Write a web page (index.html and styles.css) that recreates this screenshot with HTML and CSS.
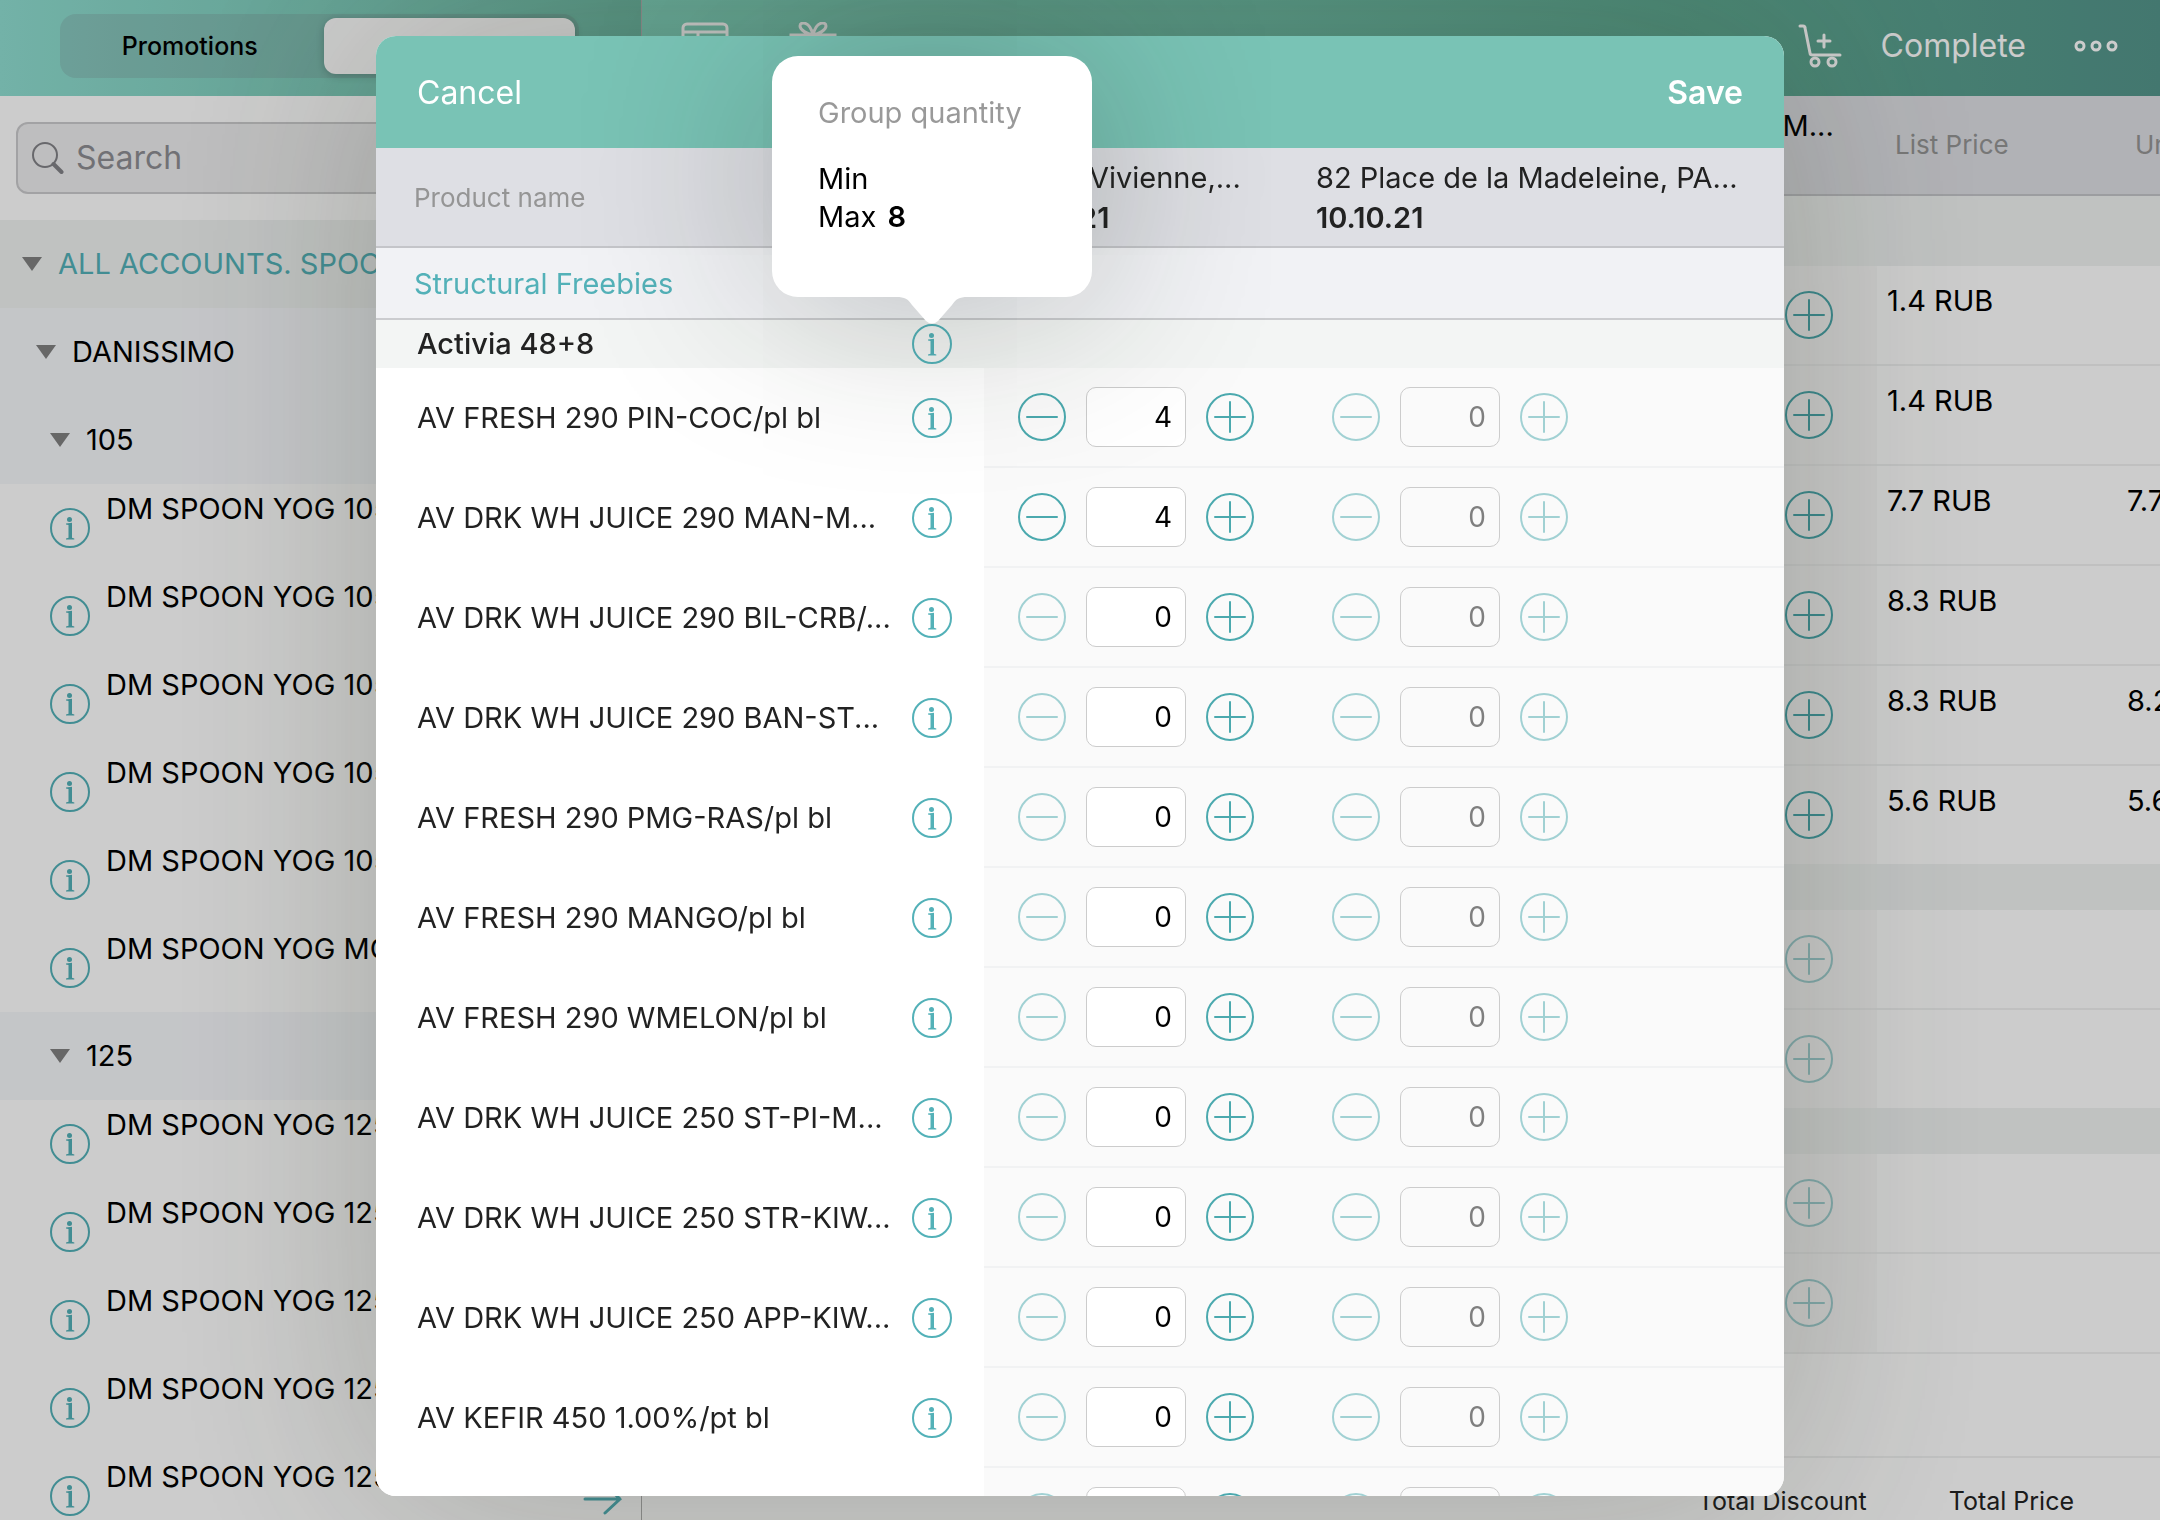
FILE: index.html
```html
<!DOCTYPE html>
<html lang="en">
<head>
<meta charset="utf-8">
<title>Structural Freebies</title>
<link rel="stylesheet" href="styles.css">
</head>
<body>
<svg class="sprite" aria-hidden="true">
  <symbol id="info" viewBox="0 0 40 40"><circle cx="20" cy="20" r="19" fill="none" stroke="currentColor" stroke-width="2"/><circle cx="19.5" cy="11.5" r="2.5" fill="currentColor"/><path d="M16 15.500l6-.7V29.800l2.300.6v1.200h-8.300v-1.200l2.500-.6V17l-2.500-.5z" fill="currentColor"/></symbol>
  <symbol id="plus" viewBox="0 0 48 48"><circle cx="24" cy="24" r="23" fill="none" stroke="currentColor" stroke-width="2"/><path d="M9 24h30M24 9v30" stroke="currentColor" stroke-width="2" stroke-linecap="round"/></symbol>
  <symbol id="minus" viewBox="0 0 48 48"><circle cx="24" cy="24" r="23" fill="none" stroke="currentColor" stroke-width="2"/><path d="M9 24h30" stroke="currentColor" stroke-width="2" stroke-linecap="round"/></symbol>
</svg>

<div class="app">
  <aside class="sidebar">
    <header class="side-nav">
      <div class="segment">
        <button class="segment-item">Promotions</button>
        <button class="segment-item segment-active">Products</button>
      </div>
    </header>
    <div class="search-wrap">
      <label class="search">
        <svg width="32" height="32" viewBox="0 0 32 32" fill="none" stroke="currentColor" aria-hidden="true"><circle cx="13" cy="13" r="12" stroke-width="2"/><path d="M21.500 22l8 8" stroke-width="4" stroke-linecap="round"/></svg>
        <input type="search" placeholder="Search" aria-label="Search">
      </label>
    </div>
    <ul class="tree">
      <li class="node node-root"><i class="caret"></i>ALL ACCOUNTS. SPOON</li>
      <li class="node node-brand"><i class="caret"></i>DANISSIMO</li>
      <li class="node node-size"><i class="caret"></i>105</li>
      <li class="leaf"><svg class="info"><use href="#info"/></svg><span>DM SPOON YOG 105</span></li>
      <li class="leaf"><svg class="info"><use href="#info"/></svg><span>DM SPOON YOG 105</span></li>
      <li class="leaf"><svg class="info"><use href="#info"/></svg><span>DM SPOON YOG 105</span></li>
      <li class="leaf"><svg class="info"><use href="#info"/></svg><span>DM SPOON YOG 105</span></li>
      <li class="leaf"><svg class="info"><use href="#info"/></svg><span>DM SPOON YOG 105</span></li>
      <li class="leaf"><svg class="info"><use href="#info"/></svg><span>DM SPOON YOG MOUSSE</span></li>
      <li class="node node-size"><i class="caret"></i>125</li>
      <li class="leaf"><svg class="info"><use href="#info"/></svg><span>DM SPOON YOG 125</span></li>
      <li class="leaf"><svg class="info"><use href="#info"/></svg><span>DM SPOON YOG 125</span></li>
      <li class="leaf"><svg class="info"><use href="#info"/></svg><span>DM SPOON YOG 125</span></li>
      <li class="leaf"><svg class="info"><use href="#info"/></svg><span>DM SPOON YOG 125</span></li>
      <li class="leaf"><svg class="info"><use href="#info"/></svg><span>DM SPOON YOG 125</span></li>
    </ul>
    <button class="collapse" aria-label="Next"><svg width="40" height="32" viewBox="0 0 40 32" fill="none" stroke="currentColor" stroke-width="3" stroke-linecap="round"><path d="M2 16h35M22 2l15 14-15 14"/></svg></button>
  </aside>

  <main class="order">
    <header class="order-nav">
      <svg width="48" height="48" viewBox="0 0 48 48" fill="none" stroke="currentColor" stroke-width="3" aria-hidden="true"><rect x="2" y="2" width="44" height="40" rx="4"/><path d="M2 10h44M17 10v32"/></svg>
      <svg width="48" height="48" viewBox="0 0 48 48" fill="none" stroke="currentColor" stroke-width="3" aria-hidden="true"><path d="M24 13C18 12 11 8 11 4c0-5 10-5 13 9 3-14 13-14 13-9 0 4-7 8-13 9M2 13h44v8H2zM5 21v23h38V21"/></svg>
      <span class="spacer"></span>
      <button class="nav-button" aria-label="Add to cart"><svg width="44" height="44" viewBox="0 0 44 44" fill="none" stroke="currentColor" stroke-width="3" stroke-linecap="round" stroke-linejoin="round"><path d="M2 2h3q2 0 2 2l5 25q0 2 3 2h27M26 11v12M20 17h12"/><circle cx="17" cy="38" r="4"/><circle cx="34" cy="38" r="4"/></svg></button>
      <button class="nav-button">Complete</button>
      <button class="nav-button nav-more" aria-label="More"><svg width="44" height="12" viewBox="0 0 44 12" fill="none" stroke="currentColor" stroke-width="3"><circle cx="6" cy="6" r="4"/><circle cx="22" cy="6" r="4"/><circle cx="38" cy="6" r="4"/></svg></button>
    </header>
    <table class="prices">
      <colgroup><col><col class="col-store"><col class="col-price"><col class="col-unit"></colgroup>
      <thead>
        <tr><th></th><th class="store">82 Place de la M...</th><th class="caption">List Price</th><th class="caption">Unit Price</th></tr>
      </thead>
      <tbody>
        <tr class="band band-tall"><td colspan="4"></td></tr>
        <tr><td></td><td class="step"><button aria-label="Add"><svg><use href="#plus"/></svg></button></td><td>1.4 RUB</td><td></td></tr>
        <tr><td></td><td class="step"><button aria-label="Add"><svg><use href="#plus"/></svg></button></td><td>1.4 RUB</td><td></td></tr>
        <tr><td></td><td class="step"><button aria-label="Add"><svg><use href="#plus"/></svg></button></td><td>7.7 RUB</td><td>7.7 RUB</td></tr>
        <tr><td></td><td class="step"><button aria-label="Add"><svg><use href="#plus"/></svg></button></td><td>8.3 RUB</td><td></td></tr>
        <tr><td></td><td class="step"><button aria-label="Add"><svg><use href="#plus"/></svg></button></td><td>8.3 RUB</td><td>8.2 RUB</td></tr>
        <tr class="last"><td></td><td class="step"><button aria-label="Add"><svg><use href="#plus"/></svg></button></td><td>5.6 RUB</td><td>5.6 RUB</td></tr>
        <tr class="band"><td colspan="4"></td></tr>
        <tr><td></td><td class="step"><button aria-label="Add" disabled><svg><use href="#plus"/></svg></button></td><td></td><td></td></tr>
        <tr class="last"><td></td><td class="step"><button aria-label="Add" disabled><svg><use href="#plus"/></svg></button></td><td></td><td></td></tr>
        <tr class="band"><td colspan="4"></td></tr>
        <tr><td></td><td class="step"><button aria-label="Add" disabled><svg><use href="#plus"/></svg></button></td><td></td><td></td></tr>
        <tr><td></td><td class="step"><button aria-label="Add" disabled><svg><use href="#plus"/></svg></button></td><td></td><td></td></tr>
      </tbody>
    </table>
    <footer class="totals"><span>Total Discount</span><span>Total Price</span></footer>
  </main>
</div>

<div class="scrim">
  <div class="dialog-frame">
    <section class="dialog" role="dialog" aria-label="Structural Freebies">
      <header class="dialog-nav">
        <button>Cancel</button>
        <button class="strong">Save</button>
      </header>
      <table class="freebies">
        <colgroup><col class="col-name"><col class="col-store"><col></colgroup>
        <thead>
          <tr class="stores">
            <th class="caption">Product name</th>
            <th><div>3 Rue Vivienne,...</div><div class="date">10.10.21</div></th>
            <th><div>82 Place de la Madeleine, PA...</div><div class="date">10.10.21</div></th>
          </tr>
        </thead>
        <tbody>
          <tr class="section"><td colspan="3">Structural Freebies</td></tr>
          <tr class="group"><td><div class="name"><span>Activia 48+8</span><button aria-label="Group quantity"><svg class="info"><use href="#info"/></svg></button></div></td><td colspan="2"></td></tr>
          <tr class="item"><td><div class="name"><span>AV FRESH 290 PIN-COC/pl bl</span><button aria-label="Info"><svg class="info"><use href="#info"/></svg></button></div></td>
            <td><div class="stepper"><button aria-label="Less"><svg><use href="#minus"/></svg></button><input value="4" aria-label="Quantity"><button aria-label="More"><svg><use href="#plus"/></svg></button></div></td>
            <td><div class="stepper"><button aria-label="Less" disabled><svg><use href="#minus"/></svg></button><input value="0" aria-label="Quantity" disabled><button aria-label="More" disabled><svg><use href="#plus"/></svg></button></div></td></tr>
          <tr class="item"><td><div class="name"><span>AV DRK WH JUICE 290 MAN-M...</span><button aria-label="Info"><svg class="info"><use href="#info"/></svg></button></div></td>
            <td><div class="stepper"><button aria-label="Less"><svg><use href="#minus"/></svg></button><input value="4" aria-label="Quantity"><button aria-label="More"><svg><use href="#plus"/></svg></button></div></td>
            <td><div class="stepper"><button aria-label="Less" disabled><svg><use href="#minus"/></svg></button><input value="0" aria-label="Quantity" disabled><button aria-label="More" disabled><svg><use href="#plus"/></svg></button></div></td></tr>
          <tr class="item"><td><div class="name"><span>AV DRK WH JUICE 290 BIL-CRB/...</span><button aria-label="Info"><svg class="info"><use href="#info"/></svg></button></div></td>
            <td><div class="stepper"><button aria-label="Less" disabled><svg><use href="#minus"/></svg></button><input value="0" aria-label="Quantity"><button aria-label="More"><svg><use href="#plus"/></svg></button></div></td>
            <td><div class="stepper"><button aria-label="Less" disabled><svg><use href="#minus"/></svg></button><input value="0" aria-label="Quantity" disabled><button aria-label="More" disabled><svg><use href="#plus"/></svg></button></div></td></tr>
          <tr class="item"><td><div class="name"><span>AV DRK WH JUICE 290 BAN-ST...</span><button aria-label="Info"><svg class="info"><use href="#info"/></svg></button></div></td>
            <td><div class="stepper"><button aria-label="Less" disabled><svg><use href="#minus"/></svg></button><input value="0" aria-label="Quantity"><button aria-label="More"><svg><use href="#plus"/></svg></button></div></td>
            <td><div class="stepper"><button aria-label="Less" disabled><svg><use href="#minus"/></svg></button><input value="0" aria-label="Quantity" disabled><button aria-label="More" disabled><svg><use href="#plus"/></svg></button></div></td></tr>
          <tr class="item"><td><div class="name"><span>AV FRESH 290 PMG-RAS/pl bl</span><button aria-label="Info"><svg class="info"><use href="#info"/></svg></button></div></td>
            <td><div class="stepper"><button aria-label="Less" disabled><svg><use href="#minus"/></svg></button><input value="0" aria-label="Quantity"><button aria-label="More"><svg><use href="#plus"/></svg></button></div></td>
            <td><div class="stepper"><button aria-label="Less" disabled><svg><use href="#minus"/></svg></button><input value="0" aria-label="Quantity" disabled><button aria-label="More" disabled><svg><use href="#plus"/></svg></button></div></td></tr>
          <tr class="item"><td><div class="name"><span>AV FRESH 290 MANGO/pl bl</span><button aria-label="Info"><svg class="info"><use href="#info"/></svg></button></div></td>
            <td><div class="stepper"><button aria-label="Less" disabled><svg><use href="#minus"/></svg></button><input value="0" aria-label="Quantity"><button aria-label="More"><svg><use href="#plus"/></svg></button></div></td>
            <td><div class="stepper"><button aria-label="Less" disabled><svg><use href="#minus"/></svg></button><input value="0" aria-label="Quantity" disabled><button aria-label="More" disabled><svg><use href="#plus"/></svg></button></div></td></tr>
          <tr class="item"><td><div class="name"><span>AV FRESH 290 WMELON/pl bl</span><button aria-label="Info"><svg class="info"><use href="#info"/></svg></button></div></td>
            <td><div class="stepper"><button aria-label="Less" disabled><svg><use href="#minus"/></svg></button><input value="0" aria-label="Quantity"><button aria-label="More"><svg><use href="#plus"/></svg></button></div></td>
            <td><div class="stepper"><button aria-label="Less" disabled><svg><use href="#minus"/></svg></button><input value="0" aria-label="Quantity" disabled><button aria-label="More" disabled><svg><use href="#plus"/></svg></button></div></td></tr>
          <tr class="item"><td><div class="name"><span>AV DRK WH JUICE 250 ST-PI-M...</span><button aria-label="Info"><svg class="info"><use href="#info"/></svg></button></div></td>
            <td><div class="stepper"><button aria-label="Less" disabled><svg><use href="#minus"/></svg></button><input value="0" aria-label="Quantity"><button aria-label="More"><svg><use href="#plus"/></svg></button></div></td>
            <td><div class="stepper"><button aria-label="Less" disabled><svg><use href="#minus"/></svg></button><input value="0" aria-label="Quantity" disabled><button aria-label="More" disabled><svg><use href="#plus"/></svg></button></div></td></tr>
          <tr class="item"><td><div class="name"><span>AV DRK WH JUICE 250 STR-KIW...</span><button aria-label="Info"><svg class="info"><use href="#info"/></svg></button></div></td>
            <td><div class="stepper"><button aria-label="Less" disabled><svg><use href="#minus"/></svg></button><input value="0" aria-label="Quantity"><button aria-label="More"><svg><use href="#plus"/></svg></button></div></td>
            <td><div class="stepper"><button aria-label="Less" disabled><svg><use href="#minus"/></svg></button><input value="0" aria-label="Quantity" disabled><button aria-label="More" disabled><svg><use href="#plus"/></svg></button></div></td></tr>
          <tr class="item"><td><div class="name"><span>AV DRK WH JUICE 250 APP-KIW...</span><button aria-label="Info"><svg class="info"><use href="#info"/></svg></button></div></td>
            <td><div class="stepper"><button aria-label="Less" disabled><svg><use href="#minus"/></svg></button><input value="0" aria-label="Quantity"><button aria-label="More"><svg><use href="#plus"/></svg></button></div></td>
            <td><div class="stepper"><button aria-label="Less" disabled><svg><use href="#minus"/></svg></button><input value="0" aria-label="Quantity" disabled><button aria-label="More" disabled><svg><use href="#plus"/></svg></button></div></td></tr>
          <tr class="item"><td><div class="name"><span>AV KEFIR 450 1.00%/pt bl</span><button aria-label="Info"><svg class="info"><use href="#info"/></svg></button></div></td>
            <td><div class="stepper"><button aria-label="Less" disabled><svg><use href="#minus"/></svg></button><input value="0" aria-label="Quantity"><button aria-label="More"><svg><use href="#plus"/></svg></button></div></td>
            <td><div class="stepper"><button aria-label="Less" disabled><svg><use href="#minus"/></svg></button><input value="0" aria-label="Quantity" disabled><button aria-label="More" disabled><svg><use href="#plus"/></svg></button></div></td></tr>
          <tr class="item"><td></td>
            <td><div class="stepper"><button aria-label="Less" disabled><svg><use href="#minus"/></svg></button><input aria-label="Quantity"><button aria-label="More"><svg><use href="#plus"/></svg></button></div></td>
            <td><div class="stepper"><button aria-label="Less" disabled><svg><use href="#minus"/></svg></button><input aria-label="Quantity" disabled><button aria-label="More" disabled><svg><use href="#plus"/></svg></button></div></td></tr>
        </tbody>
      </table>
    </section>
    <div class="popover" role="tooltip">
      <p class="popover-title">Group quantity</p>
      <p>Min</p>
      <p>Max <b>8</b></p>
      <svg class="popover-arrow" width="72" height="28" viewBox="0 0 72 28" aria-hidden="true"><path d="M0 0C9 0 12 2 16 8l14 16q6 5 12 0L56 8C60 2 63 0 72 0z" fill="#fff"/></svg>
    </div>
  </div>
</div>
</body>
</html>
```
FILE: styles.css
```css
* { box-sizing: border-box; }
body {
  margin: 0;
  height: 100vh;
  overflow: hidden;
  font: 400 29px/40px Inter, "Liberation Sans", sans-serif;
  color: #000;
  background: #fff;
}
button, input { font: inherit; color: inherit; border: 0; padding: 0; background: none; }
button { display: block; }
button svg, .info { display: block; }
table { width: 100%; table-layout: fixed; border-spacing: 0; }
td, th { padding: 0; text-align: left; font-weight: 400; white-space: nowrap; }
.sprite { position: absolute; width: 0; height: 0; }
.col-store { width: 314px; }
.info { width: 40px; height: 40px; color: #53b1b8; flex: none; }
.caption { font-size: 26px; color: #959595; }

/* Page behind the dialog */
.app { display: grid; grid-template-columns: 642px minmax(0, 1fr); height: 100%; }
.sidebar { position: relative; overflow: hidden; border-right: 1px solid #b0b0b0; }
.side-nav {
  height: 96px;
  padding: 14px 62px 0 60px;
  background: linear-gradient(90deg, #90dfd2, #6eb9a4);
}
.segment {
  display: grid;
  grid-template-columns: 1fr 1fr;
  gap: 8px;
  height: 64px;
  padding: 4px;
  border-radius: 16px;
  background: rgba(118, 118, 128, .2);
}
.segment-item { font-size: 25px; font-weight: 500; border-radius: 12px; }
.segment-active { background: #fff; box-shadow: 0 2px 8px rgba(0, 0, 0, .2); }
.search-wrap { height: 124px; padding: 26px 16px 0; }
.search {
  display: flex;
  align-items: center;
  gap: 12px;
  height: 72px;
  padding-left: 14px;
  border: 2px solid #cbcbcd;
  border-radius: 12px;
  background: #eeeeef;
  color: #838387;
}
.search input { flex: 1; min-width: 0; font-size: 32px; outline: 0; }
.search input::placeholder { color: #8e8e93; opacity: 1; }
.tree { list-style: none; margin: 0; padding: 0; white-space: nowrap; }
.node { display: flex; align-items: center; gap: 16px; height: 88px; background: #f6f8fb; }
.node-root { padding-left: 22px; background: #f0f3f2; color: #53b1b8; }
.node-brand { padding-left: 36px; }
.node-size { padding-left: 50px; }
.caret {
  width: 20px;
  height: 14px;
  background: #818181;
  clip-path: polygon(0 0, 100% 0, 50% 100%);
}
.leaf { display: flex; gap: 16px; height: 88px; padding: 5px 0 0 50px; }
.leaf .info { margin-top: 19px; }
.collapse { position: absolute; right: 18px; bottom: 5px; color: #53b1b8; }

.order { display: flex; flex-direction: column; overflow: hidden; }
.order-nav {
  display: flex;
  align-items: center;
  gap: 60px;
  flex: none;
  height: 96px;
  padding: 0 42px 4px 39px;
  color: #fff;
  font-size: 32px;
  background: linear-gradient(90deg, #82d4be, #5ea992 70%, #54958b);
}
.order-nav .spacer { flex: 1; }
.nav-button + .nav-button { margin-left: -21px; }
.nav-button + .nav-more { margin-left: -12px; }
.col-price { width: 240px; }
.col-unit { width: 43px; }
.prices thead th { height: 100px; background: #dedfe4; border-bottom: 2px solid #c4c5c9; padding-left: 18px; }
.prices .store { vertical-align: top; padding-top: 10px; }
.prices tbody td { height: 100px; padding: 15px 0 0 10px; vertical-align: top; border-bottom: 2px solid #f0f1f1; }
.prices tbody .last td { height: 98px; border: 0; }
.prices tbody .band td { height: 46px; padding: 0; border: 0; background: #f0f3f2; }
.prices tbody .band-tall td { height: 70px; }
.prices tbody .step { padding: 25px 44px 0 0; background: #fafafa; }
.step button { margin-left: auto; }
.step svg, .stepper svg { display: block; width: 48px; height: 48px; color: #4ba9ae; }
button:disabled svg { opacity: .5; }
.totals {
  display: flex;
  justify-content: flex-end;
  gap: 82px;
  margin-top: auto;
  height: 64px;
  padding: 23px 86px 0 0;
  border-top: 2px solid #f0f1f1;
  font-size: 25px;
  color: #222;
}

/* Dialog */
.scrim {
  position: fixed;
  inset: 0;
  display: flex;
  justify-content: center;
  padding: 36px 0 24px;
  overflow: hidden;
  background: rgba(0, 0, 0, .2);
}
.dialog-frame { position: relative; width: 1408px; max-width: 96vw; }
.dialog {
  height: 100%;
  overflow: hidden;
  border-radius: 20px;
  background: #fff;
  box-shadow: 0 0 220px rgba(40, 52, 28, .24);
  color: #222;
}
.dialog-nav {
  display: flex;
  justify-content: space-between;
  align-items: center;
  height: 112px;
  padding: 2px 41px 0;
  background: #79c3b5;
  color: #fff;
  font-size: 32px;
}
.strong { font-weight: 600; }
.col-name { width: 608px; }
.stores th { height: 100px; padding: 10px 0 0 18px; vertical-align: top; background: #dedfe4; border-bottom: 2px solid #c4c5c9; }
.stores .caption { padding: 2px 0 0 38px; vertical-align: middle; }
.date { font-weight: 600; }
.section td { height: 72px; padding: 2px 0 0 38px; background: #f1f2f5; border-bottom: 2px solid #cbcccf; color: #53b1b8; }
.group td { height: 48px; background: #f3f5f4; font-weight: 500; }
.name { display: flex; justify-content: space-between; align-items: center; padding: 0 32px 0 41px; }
.item td { height: 100px; background: #fafafa; border-bottom: 2px solid #f1f2f3; }
.item td:first-child { padding-top: 2px; background: #fff; border-color: #fff; }
.stepper { display: flex; align-items: center; gap: 20px; padding-left: 34px; }
.stepper input {
  width: 100px;
  height: 60px;
  padding-right: 13px;
  border: 1px solid #ccc;
  border-radius: 10px;
  background: #fff;
  color: #000;
  font-size: 28px;
  text-align: right;
}
.stepper input:disabled { background: transparent; color: #7f7f7f; }

/* Group quantity popover, anchored to the group's info button */
.popover {
  position: absolute;
  left: 396px;
  top: 20px;
  width: 320px;
  height: 241px;
  padding: 38px 46px 0;
  border-radius: 26px;
  background: #fff;
  box-shadow: 0 0 190px rgba(25, 35, 28, .3);
  color: #000;
  line-height: 38px;
}
.popover p { margin: 0; white-space: nowrap; }
.popover .popover-title { margin-bottom: 28px; color: #999; }
.popover b { font-weight: 600; margin-left: 3px; }
.popover-arrow { position: absolute; left: 124px; top: 100%; }
```
